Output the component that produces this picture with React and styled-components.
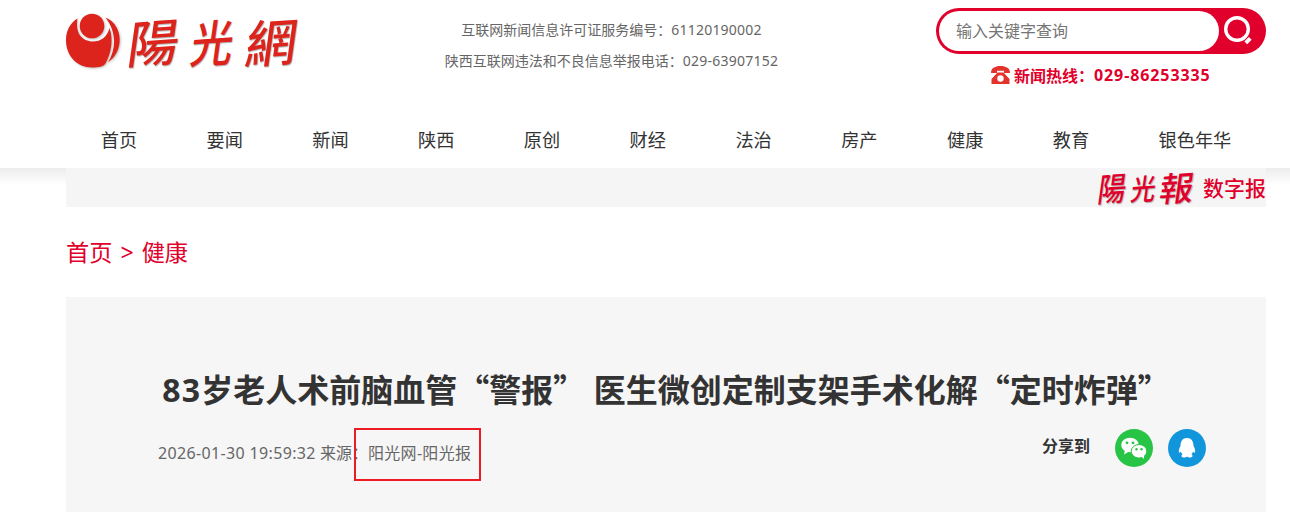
import React from "react";
import styled, { createGlobalStyle } from "styled-components";

const RED = "#e0002b";
const LOGO_RED = "#dc241c";

const GlobalStyle = createGlobalStyle`
  * { box-sizing: border-box; }
  body {
    margin: 0;
    background: #fff;
    font-family: "Noto Sans", "Noto Sans CJK SC", sans-serif;
    color: #333;
    overflow: hidden;
  }
`;

const Page = styled.div`
  height: 512px;
  overflow: hidden;
`;

const Container = styled.div`
  width: 1200px;
  margin-left: 66px;
`;

const Top = styled(Container)`
  display: flex;
  height: 113px;
`;

const Brand = styled.div`
  display: flex;
  width: 240px;
  padding-top: 8px;
`;

const Emblem = styled.svg`
  width: 56px;
  height: 64px;
  flex: none;
  filter: drop-shadow(1px 1px 1px rgba(0, 0, 0, 0.25));
`;

const Wordmark = styled.div`
  display: flex;
  gap: ${(p) => p.$gap}px;
  margin-left: ${(p) => p.$left || 0}px;
  color: ${(p) => p.$color};
  font-family: "Noto Sans CJK TC", sans-serif;
  font-weight: 500;
  text-shadow: 1px 1px 1px rgba(0, 0, 0, 0.3);
`;

const Brush = styled.span`
  display: flex;
  justify-content: center;
  width: ${(p) => p.$w}px;
  height: ${(p) => p.$h}px;
  line-height: ${(p) => p.$h}px;
  font-size: ${(p) => p.$size}px;
  transform: skew(-8deg, -4deg) scaleX(${(p) => p.$sx || 1});
`;

const Licence = styled.div`
  width: 611px;
  padding-top: 14px;
  text-align: center;
  font-size: 14px;
  line-height: 31px;
  color: #666;
`;

const LicenceRow = styled.div`
  width: 611px;
`;

const Digits = styled.span`
  letter-spacing: ${(p) => p.$track}px;
`;

const Side = styled.div`
  width: 330px;
  margin-left: auto;
  padding-top: 8px;
`;

const Search = styled.div`
  display: flex;
  align-items: center;
  height: 46px;
  padding: 3px;
  border-radius: 23px;
  background: ${RED};
`;

const SearchField = styled.div`
  width: 280px;
  height: 40px;
  padding-left: 17px;
  border-radius: 20px;
  background: #fff;
  font-size: 16px;
  line-height: 40px;
  color: #757575;
`;

const SearchIcon = styled.svg`
  width: 32px;
  height: 32px;
  margin-left: 3px;
`;

const Hotline = styled.div`
  display: flex;
  align-items: center;
  height: 42px;
  padding-left: 55px;
  font-size: 16px;
  font-weight: 700;
  color: ${RED};
  white-space: nowrap;
`;

const Phone = styled.svg`
  width: 19px;
  height: 18px;
  margin-right: 4px;
`;

const Nav = styled(Container)`
  display: flex;
  justify-content: space-around;
  height: 55px;
  font-size: 18.2px;
  line-height: 55px;
`;

const ShadowBand = styled.div`
  height: 39px;
  background: linear-gradient(#ececec, #fff 17px);
`;

const PaperBar = styled(Container)`
  display: flex;
  justify-content: flex-end;
  height: 39px;
  background: #f5f5f5;
`;

const PaperLabel = styled.span`
  margin-left: 8px;
  font-size: 21px;
  line-height: 38px;
  font-weight: 500;
  font-family: "Noto Sans CJK SC", sans-serif;
  color: ${RED};
`;

const Crumbs = styled(Container)`
  display: flex;
  gap: 8px;
  height: 90px;
  font-size: 23.2px;
  line-height: 91px;
  color: ${RED};
`;

const Article = styled(Container)`
  height: 215px;
  padding-top: 66px;
  background: #f6f6f6;
`;

const Title = styled.h1`
  margin: 0;
  height: 52px;
  text-align: center;
  font-size: 32px;
  line-height: 50px;
  font-weight: 700;
  white-space: nowrap;
`;

const Quote = styled.span`
  font-family: "Noto Sans CJK SC", sans-serif;
`;

const Meta = styled.div`
  display: flex;
  padding: 13px 60px 0 92px;
`;

const Source = styled.div`
  display: flex;
  height: 53px;
  font-size: 16px;
  line-height: 51px;
  color: #666;
  white-space: nowrap;
`;

const Highlight = styled.div`
  width: 127px;
  height: 53px;
  margin-left: -14px;
  padding-left: 12px;
  border: 2px solid #ed1c24;
  line-height: 47px;
`;

const Share = styled.div`
  display: flex;
  height: 38px;
  margin: 1px 0 0 auto;
  font-size: 16px;
  line-height: 35px;
  font-weight: 700;
`;

const ShareIcon = styled.svg`
  width: 38px;
  height: 38px;
  margin-left: ${(p) => p.$gap}px;
`;

const NAV = ["首页", "要闻", "新闻", "陕西", "原创", "财经", "法治", "房产", "健康", "教育", "银色年华"];

export default function App() {
  return (
    <Page lang="zh-CN">
      <GlobalStyle />
      <Top as="header">
        <Brand>
          <Emblem viewBox="0 0 56 64">
            <path d="M11.500 10.500C4 15 0 23 0 32c0 16 11 27.500 26 27.500 7 0 11.500-1 13.500-4C45.500 45 47.500 31 43.500 20 41 29 35 33.500 27 33.500 16 33.500 9 25 11.500 10.500Z" fill={LOGO_RED} />
            <circle cx="26" cy="18" r="12.300" fill={LOGO_RED} />
            <path d="M39.500 9.500C58 17 58 44 42 54.500 50.500 40 50.500 24 39.500 9.500Z" fill={LOGO_RED} />
          </Emblem>
          <Wordmark $gap={7} $left={6} $color={LOGO_RED}>
            <Brush $w={52} $h={64} $size={51}>陽</Brush>
            <Brush $w={52} $h={64} $size={50} $sx={0.85}>光</Brush>
            <Brush $w={52} $h={64} $size={51}>網</Brush>
          </Wordmark>
        </Brand>
        <Licence>
          <LicenceRow>互联网新闻信息许可证服务编号：<Digits $track={0.2}>61120190002</Digits></LicenceRow>
          <LicenceRow>陕西互联网违法和不良信息举报电话：<Digits $track={0.25}>029-63907152</Digits></LicenceRow>
        </Licence>
        <Side>
          <Search>
            <SearchField>输入关键字查询</SearchField>
            <SearchIcon viewBox="0 0 32 32" fill="none" stroke="#fff">
              <circle cx="15" cy="14" r="11.300" strokeWidth="3.400" />
              <path d="M23.800 27.800l4.400-4.400" strokeWidth="4" />
            </SearchIcon>
          </Search>
          <Hotline>
            <Phone viewBox="0 0 19 18" fill="#e2342d">
              <path d="M0 7C0 2 4 0 9.500 0S19 2 19 7h-6V4.800H6V7Z" />
              <path fillRule="evenodd" d="M6.500 6.500h6l6 6.500v5h-18v-5Zm3 2.800a3.200 3.200 0 1 0 0 6.400 3.200 3.200 0 0 0 0-6.400Z" />
            </Phone>
            新闻热线：<Digits $track={0.9}>029-86253335</Digits>
          </Hotline>
        </Side>
      </Top>
      <Nav as="nav">
        {NAV.map((item) => <span key={item}>{item}</span>)}
      </Nav>
      <ShadowBand>
        <PaperBar>
          <Wordmark $gap={0} $color={RED}>
            <Brush $w={33} $h={38} $size={33} $sx={0.85}>陽</Brush>
            <Brush $w={30} $h={38} $size={29} $sx={0.85}>光</Brush>
            <Brush $w={36} $h={38} $size={34}>報</Brush>
          </Wordmark>
          <PaperLabel>数字报</PaperLabel>
        </PaperBar>
      </ShadowBand>
      <Crumbs>
        <span>首页</span>
        <span>&gt;</span>
        <span>健康</span>
      </Crumbs>
      <Article as="main">
        <Title>
          <Digits $track={1.2}>83</Digits>岁老人术前脑血管<Quote>“</Quote>警报<Quote>”</Quote> 医生微创定制支架手术化解<Quote>“</Quote>定时炸弹<Quote>”</Quote>
        </Title>
        <Meta>
          <Source>
            <span><Digits $track={0.35}>2026-01-30 19:59:32</Digits> 来源：</span>
            <Highlight><Digits $track={0.3}>阳光网-阳光报</Digits></Highlight>
          </Source>
          <Share>
            分享到
            <ShareIcon $gap={25} viewBox="0 0 38 38">
              <circle cx="19" cy="19" r="19" fill="#28c445" />
              <ellipse cx="15" cy="16" rx="8.800" ry="7.300" fill="#fff" />
              <path d="M10 21l-1 4.500 5-3" fill="#fff" />
              <ellipse cx="24" cy="22.300" rx="7.800" ry="6.800" fill="#fff" stroke="#28c445" />
              <path d="M26 27l3 3v-4" fill="#fff" />
              <g fill="#28c445">
                <circle cx="12" cy="13.800" r="1.400" />
                <circle cx="18" cy="13.800" r="1.400" />
                <circle cx="21.500" cy="20.300" r="1.200" />
                <circle cx="26.500" cy="20.300" r="1.200" />
              </g>
            </ShareIcon>
            <ShareIcon $gap={15} viewBox="0 0 38 38">
              <circle cx="19" cy="19" r="19" fill="#1296db" />
              <path d="M19 9c-4.500 0-6.500 3.500-6.500 8-1.500 2.500-2.100 5-1.400 6.500.5.500 1.300-.3 1.800-1.100.4 1.400 1 2 1.700 2.900-1.900 1.200-1.300 3.100.8 3.100 1.700 0 2.800-.4 3.600-1 .8.600 1.900 1 3.600 1 2.100 0 2.700-1.900.8-3.100.7-.9 1.300-1.500 1.700-2.900.5.800 1.300 1.600 1.800 1.100.7-1.500.1-4-1.400-6.500 0-4.500-2-8-6.500-8Z" fill="#fff" />
            </ShareIcon>
          </Share>
        </Meta>
      </Article>
    </Page>
  );
}
